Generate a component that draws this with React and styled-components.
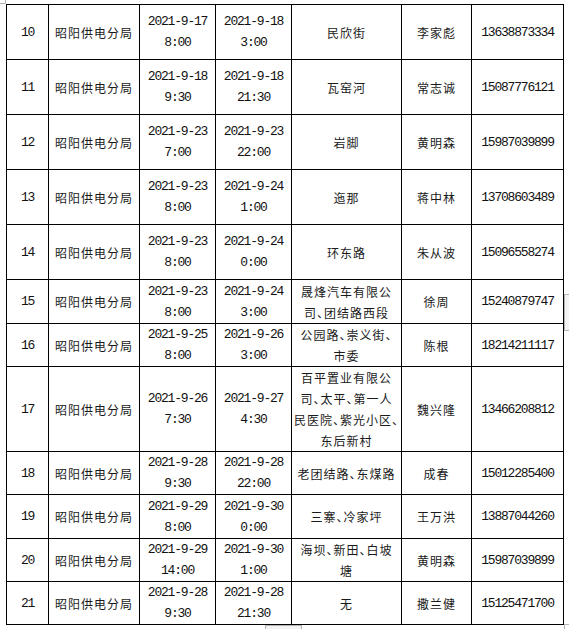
import React from 'react';
import styled, { createGlobalStyle } from 'styled-components';

const GlobalStyle = createGlobalStyle`
  html, body {
    margin: 0;
    padding: 0;
    background: #ffffff;
  }
  body {
    width: 569px;
    height: 629px;
    overflow: hidden;
  }
`;

const Page = styled.div`
  position: relative;
  width: 569px;
  height: 629px;
  padding: 4px 0 0 6px;
  box-sizing: border-box;
  background: #ffffff;
`;

const Table = styled.table`
  border-collapse: collapse;
  table-layout: fixed;
  width: 557px;
  color: #000000;
  font-family: 'Liberation Mono', 'Noto Sans CJK SC', monospace;
`;

const Row = styled.tr`
  height: ${(p) => p.$h}px;
`;

const Cell = styled.td`
  border: 1px solid #000000;
  padding: 0 2px;
  text-align: center;
  vertical-align: middle;
  white-space: nowrap;
  overflow: visible;
`;

const Digits = styled.div`
  font-family: 'Liberation Mono', monospace;
  font-size: 13px;
  letter-spacing: -1.2px;
  line-height: 21px;
  color: #111111;
`;

const Chinese = styled.div`
  font-family: 'Noto Sans CJK SC', sans-serif;
  font-size: 12px;
  line-height: 21px;
  letter-spacing: 1px;
  color: #1a1a1a;
  font-feature-settings: ${(p) => (p.$tight ? "'halt'" : 'normal')};
`;

const Mark = styled.div`
  position: absolute;
  box-sizing: border-box;
  border-color: #b4b4b4;
  border-style: solid;
  border-width: 0;
`;

const CornerMark = styled(Mark)`
  left: 0;
  top: 0;
  width: 6px;
  height: 4px;
  border-right-width: 1px;
  border-bottom-width: 1px;
`;

const SideMark = styled(Mark)`
  left: 564px;
  top: 294px;
  width: 6px;
  height: 37px;
  background: #f3f3f3;
  border-left-width: 1px;
  border-top-width: 1px;
  border-bottom-width: 1px;
`;

const BottomMark = styled(Mark)`
  left: 265px;
  top: 625px;
  width: 37px;
  height: 5px;
  background: #f3f3f3;
  border-left-width: 1px;
  border-right-width: 1px;
  border-top-width: 1px;
`;

const BottomCorner = styled(Mark)`
  left: 564px;
  top: 624px;
  width: 6px;
  height: 6px;
  border-left-width: 1px;
  border-top-width: 1px;
`;

const cols = [42, 91, 76, 76, 110, 70, 92];

const rows = [
  { no: '10', start: ['2021-9-17', '8:00'], end: ['2021-9-18', '3:00'], place: ['民欣街'], person: '李家彪', phone: '13638873334', h: 55 },
  { no: '11', start: ['2021-9-18', '9:30'], end: ['2021-9-18', '21:30'], place: ['瓦窑河'], person: '常志诚', phone: '15087776121', h: 55 },
  { no: '12', start: ['2021-9-23', '7:00'], end: ['2021-9-23', '22:00'], place: ['岩脚'], person: '黄明森', phone: '15987039899', h: 55 },
  { no: '13', start: ['2021-9-23', '8:00'], end: ['2021-9-24', '1:00'], place: ['迤那'], person: '蒋中林', phone: '13708603489', h: 55 },
  { no: '14', start: ['2021-9-23', '8:00'], end: ['2021-9-24', '0:00'], place: ['环东路'], person: '朱从波', phone: '15096558274', h: 55 },
  { no: '15', start: ['2021-9-23', '8:00'], end: ['2021-9-24', '3:00'], place: ['晟烽汽车有限公', '司、团结路西段'], person: '徐周', phone: '15240879747', h: 44 },
  { no: '16', start: ['2021-9-25', '8:00'], end: ['2021-9-26', '3:00'], place: ['公园路、崇义街、', '市委'], person: '陈根', phone: '18214211117', h: 42 },
  { no: '17', start: ['2021-9-26', '7:30'], end: ['2021-9-27', '4:30'], place: ['百平置业有限公', '司、太平、第一人', '民医院、紫光小区、', '东后新村'], person: '魏兴隆', phone: '13466208812', h: 85 },
  { no: '18', start: ['2021-9-28', '9:30'], end: ['2021-9-28', '22:00'], place: ['老团结路、东煤路'], person: '成春', phone: '15012285400', h: 43 },
  { no: '19', start: ['2021-9-29', '8:00'], end: ['2021-9-30', '0:00'], place: ['三寨、冷家坪'], person: '王万洪', phone: '13887044260', h: 44 },
  { no: '20', start: ['2021-9-29', '14:00'], end: ['2021-9-30', '1:00'], place: ['海坝、新田、白坡', '塘'], person: '黄明森', phone: '15987039899', h: 43 },
  { no: '21', start: ['2021-9-28', '9:30'], end: ['2021-9-28', '21:30'], place: ['无'], person: '撒兰健', phone: '15125471700', h: 43 },
];

function Lines({ lines, as: Comp, ...rest }) {
  return (
    <Comp {...rest}>
      {lines.map((line, i) => (
        <div key={i}>{line}</div>
      ))}
    </Comp>
  );
}

export default function App() {
  return (
    <>
      <GlobalStyle />
      <Page>
        <Table>
          <colgroup>
            {cols.map((w, i) => (
              <col key={i} style={{ width: w }} />
            ))}
          </colgroup>
          <tbody>
            {rows.map((r) => (
              <Row key={r.no} $h={r.h}>
                <Cell>
                  <Digits>{r.no}</Digits>
                </Cell>
                <Cell>
                  <Chinese>昭阳供电分局</Chinese>
                </Cell>
                <Cell>
                  <Lines lines={r.start} as={Digits} />
                </Cell>
                <Cell>
                  <Lines lines={r.end} as={Digits} />
                </Cell>
                <Cell>
                  <Lines lines={r.place} as={Chinese} $tight />
                </Cell>
                <Cell>
                  <Chinese>{r.person}</Chinese>
                </Cell>
                <Cell>
                  <Digits>{r.phone}</Digits>
                </Cell>
              </Row>
            ))}
          </tbody>
        </Table>
        <CornerMark />
        <SideMark />
        <BottomMark />
        <BottomCorner />
      </Page>
    </>
  );
}
